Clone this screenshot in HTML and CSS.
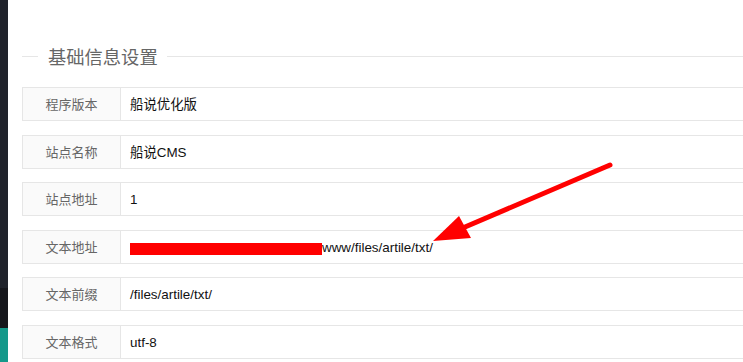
FILE: index.html
```html
<!DOCTYPE html>
<html lang="zh">
<head>
<meta charset="utf-8">
<link rel="stylesheet" href="styles.css">
</head>
<body>
<div class="app">
  <aside class="side">
    <div class="side-top"></div>
    <div class="side-mid"></div>
    <div class="side-bot"></div>
  </aside>
  <main class="content">
    <div class="legend">
      <span class="legend-line short"></span>
      <span class="legend-text">基础信息设置</span>
      <span class="legend-line"></span>
    </div>
    <div class="form">
      <div class="row"><div class="label">程序版本</div><div class="value">船说优化版</div></div>
      <div class="row"><div class="label">站点名称</div><div class="value">船说CMS</div></div>
      <div class="row"><div class="label">站点地址</div><div class="value">1</div></div>
      <div class="row"><div class="label">文本地址</div><div class="value"><span class="redact"></span>www/files/artile/txt/</div></div>
      <div class="row"><div class="label">文本前缀</div><div class="value">/files/artile/txt/</div></div>
      <div class="row"><div class="label">文本格式</div><div class="value">utf-8</div></div>
    </div>
  </main>
  <svg class="arrow" width="743" height="362" viewBox="0 0 743 362">
    <line x1="610" y1="165" x2="458" y2="230" stroke="#ff0000" stroke-width="5" stroke-linecap="round"/>
    <polygon points="433,241 459,216 471,238" fill="#ff0000"/>
  </svg>
</div>
</body>
</html>
```
FILE: styles.css
```css
* { box-sizing: border-box; }
html, body { margin: 0; padding: 0; background: #fff; }
body {
  font-family: "Liberation Sans", "Noto Sans CJK SC", sans-serif;
  width: 743px;
  height: 362px;
  overflow: hidden;
}
.app {
  position: relative;
  display: flex;
  height: 362px;
}
.side {
  width: 8px;
  flex: none;
  display: flex;
  flex-direction: column;
}
.side-top { height: 288px; background: #20232b; }
.side-mid { height: 40px; background: #16171c; }
.side-bot { flex: 1; background: #14998a; }
.content {
  flex: 1;
  padding: 44px 0 0 14px;
  overflow: hidden;
}
.legend {
  display: flex;
  align-items: center;
  height: 24px;
}
.legend-line {
  flex: 1;
  height: 1px;
  background: #e6e6e6;
}
.legend-line.short { flex: none; width: 16px; }
.legend-text {
  margin: 0 9px 0 10px;
  padding-top: 3px;
  font-size: 18.3px;
  color: #666;
  line-height: 24px;
}
.form {
  margin-top: 19px;
  width: calc(100% + 20px);
}
.row {
  display: flex;
  height: 34px;
  margin-bottom: 13.6px;
  font-size: 13px;
}
.label {
  width: 99px;
  flex: none;
  background: #fafafa;
  border: 1px solid #e6e6e6;
  color: #666;
  text-align: center;
  line-height: 32px;
  padding-top: 1px;
}
.value {
  flex: 1;
  border: 1px solid #e6e6e6;
  border-left: none;
  padding: 2px 0 0 9px;
  color: #111;
  line-height: 30px;
  font-size: 13.4px;
  display: flex;
  align-items: center;
}
.redact {
  display: block;
  flex: none;
  width: 192px;
  height: 12px;
  background: #ff0000;
  margin-top: 2px;
}
.arrow {
  position: absolute;
  left: 0;
  top: 0;
  pointer-events: none;
}
```
